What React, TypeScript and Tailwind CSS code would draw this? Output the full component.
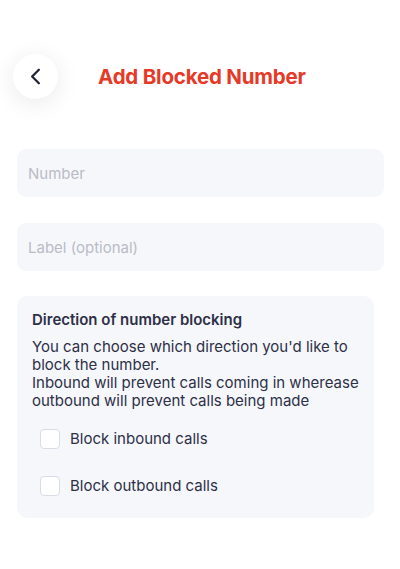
import { ChevronLeft } from "lucide-react";

export default function App() {
  return (
    <div
      className="min-h-screen w-[400px] bg-white"
      style={{ fontFamily: "Inter, 'Noto Sans', sans-serif" }}
    >
      <header className="flex items-center px-[13px] pt-[54px]">
        <button className="flex h-[45px] w-[45px] items-center justify-center rounded-full bg-white shadow-[0_4px_24px_rgba(0,0,0,0.09)]">
          <ChevronLeft className="h-[27px] w-[27px] text-[#1e2235]" strokeWidth={2} />
        </button>
        <h1 className="ml-[40px] mt-[1px] text-[20.5px] font-bold tracking-[-0.2px] text-[#e63a28]">
          Add Blocked Number
        </h1>
      </header>

      <div className="mt-[50px] flex flex-col gap-[26px] px-[17px] pr-[16px]">
        <input
          placeholder="Number"
          className="h-[48px] w-full rounded-[9px] bg-[#f6f7fb] px-[11px] text-[15px] text-[#2d3047] outline-none placeholder:text-[#b9bcc6]"
        />
        <input
          placeholder="Label (optional)"
          className="h-[48px] w-full rounded-[9px] bg-[#f6f7fb] px-[11px] text-[15px] text-[#2d3047] outline-none placeholder:text-[#b9bcc6]"
        />
      </div>

      <section className="mx-[17px] mt-[25px] w-[357px] rounded-[10px] bg-[#f6f7fb] px-[15px] pb-[22px] pt-[14px] text-[#2d3047]">
        <h2 className="text-[15px] font-semibold leading-[20px]">Direction of number blocking</h2>
        <p className="mt-[8px] text-[15px] leading-[18px]">
          You can choose which direction you'd like to block the number.
          <br />
          Inbound will prevent calls coming in wherease outbound will prevent calls being made
        </p>
        <div className="mt-[19px] flex flex-col gap-[27px] pl-[8px]">
          <label className="flex h-[20px] items-center gap-[10px] text-[15px]">
            <span className="h-[20px] w-[20px] rounded-[4px] border border-[#d9dce6] bg-white" />
            Block inbound calls
          </label>
          <label className="flex h-[20px] items-center gap-[10px] text-[15px]">
            <span className="h-[20px] w-[20px] rounded-[4px] border border-[#d9dce6] bg-white" />
            Block outbound calls
          </label>
        </div>
      </section>
    </div>
  );
}
